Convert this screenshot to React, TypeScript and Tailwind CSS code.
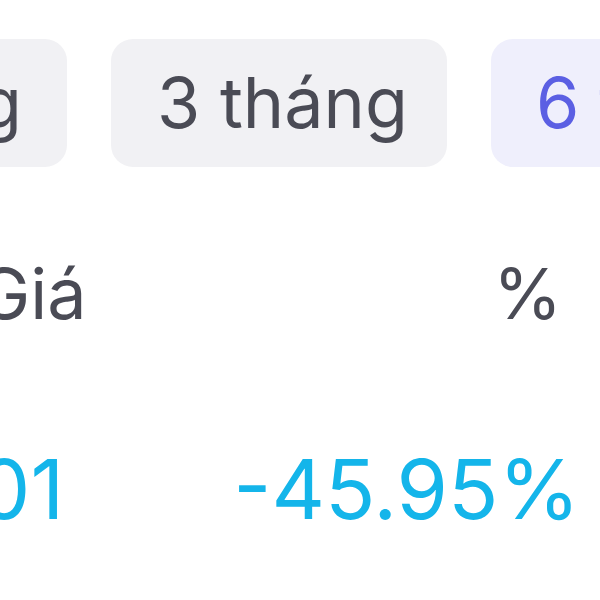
const PERIODS = [
  { label: "1 tháng", active: false, size: "px-[45px]" },
  { label: "3 tháng", active: false, size: "w-[336px] pl-[46px]" },
  { label: "6 tháng", active: true, size: "w-[336px] pl-[45px]" },
];

export default function App() {
  return (
    <div className="h-[600px] w-[600px] overflow-hidden bg-white font-['Inter','Noto_Sans',sans-serif]">
      <div className="ml-[-259px] mt-[39px] flex gap-[44px]">
        {PERIODS.map((p) => (
          <div
            key={p.label}
            className={`flex h-[128px] shrink-0 items-center whitespace-nowrap rounded-[22px] text-[70px] leading-none ${p.size} ${
              p.active ? "bg-[#efeffc] text-[#5b5fe3]" : "bg-[#f1f1f4] text-[#4a4b55]"
            }`}
          >
            {p.label}
          </div>
        ))}
      </div>

      <div className="mt-[92px] flex items-center justify-between text-[70px] leading-none text-[#4a4b55]">
        <span className="ml-[-22px]">Giá</span>
        <span className="mr-[38px]">%</span>
      </div>

      <div className="mt-[119px] flex items-center justify-between text-[83px] leading-none text-[#14b5ea]">
        <span className="ml-[-94px]">0.01</span>
        <span className="mr-[20px]">-45.95%</span>
      </div>
    </div>
  );
}
